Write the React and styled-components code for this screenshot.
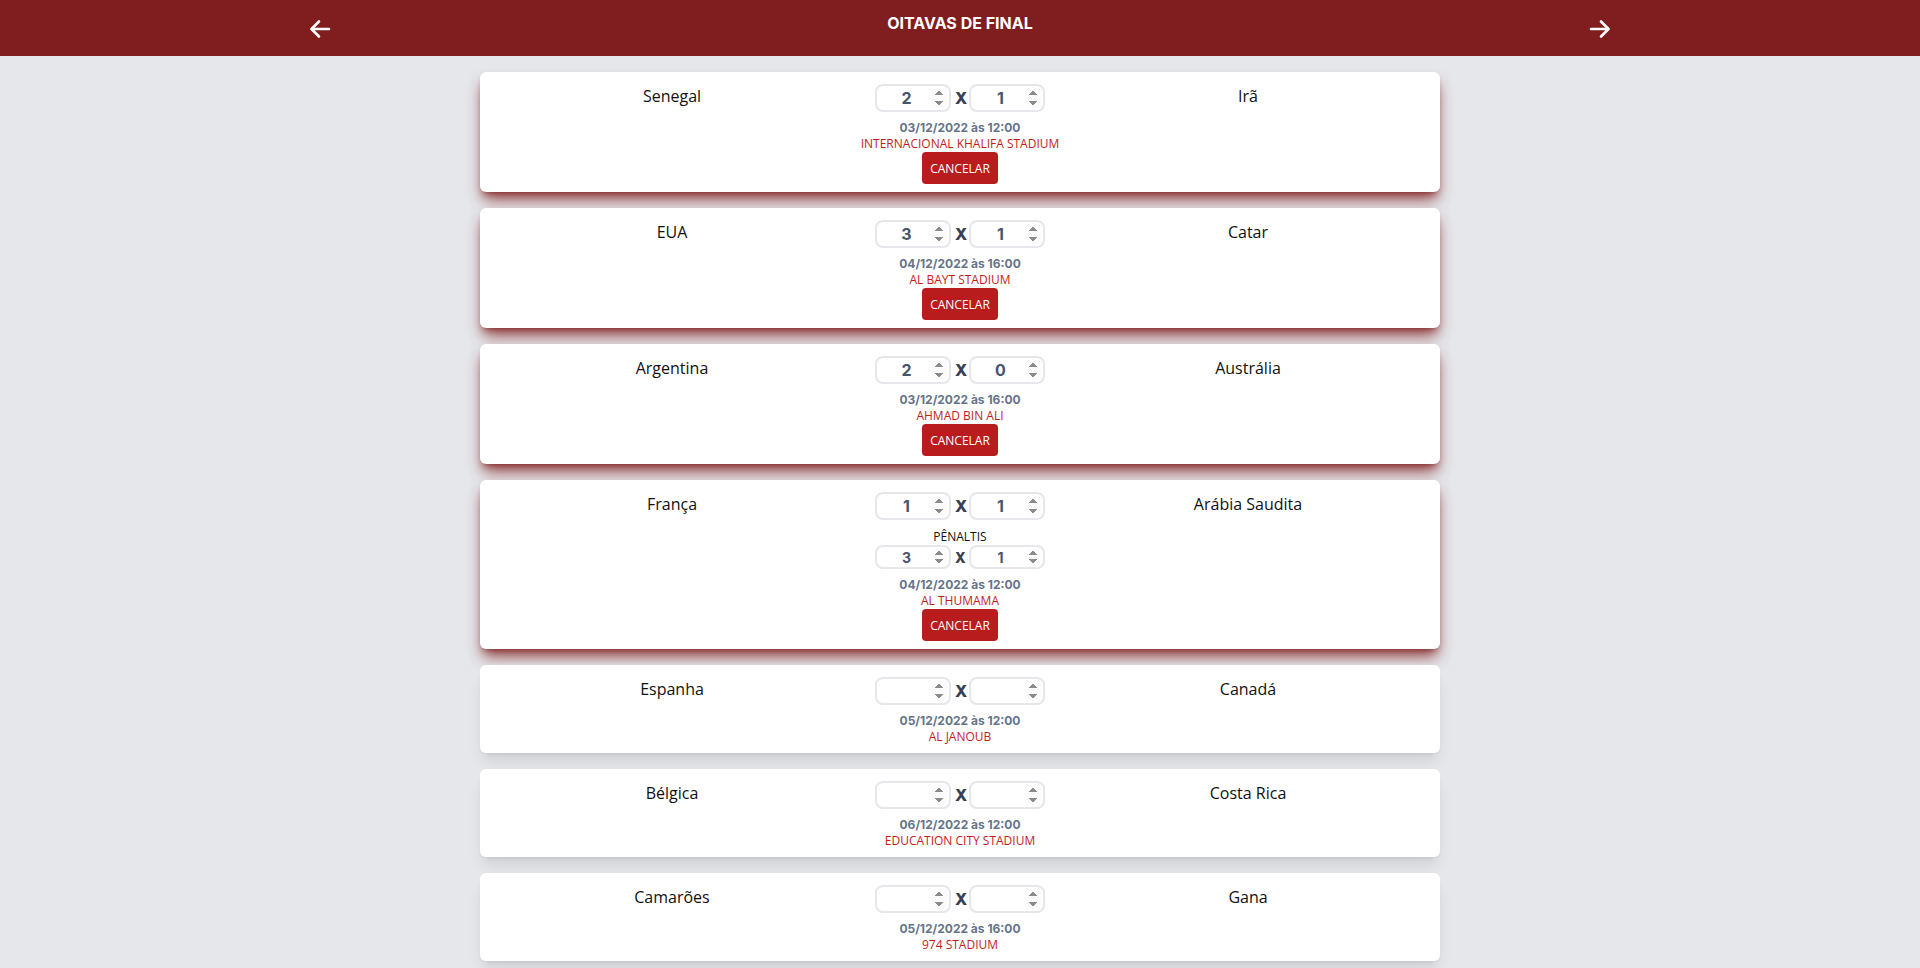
import React from 'react';
import styled, { createGlobalStyle } from 'styled-components';

const GlobalStyle = createGlobalStyle`
	body {
		margin: 0;
		background-color: #e5e7eb;
		font-family: 'Open Sans', 'Noto Sans', sans-serif;
	}
`;

const Header = styled.header`
	height: 56px;
	background-color: #801d1e;
	display: grid;
	grid-template-columns: repeat(3, 1fr);
	align-items: center;
	justify-items: center;
`;

const Title = styled.h1`
	align-self: start;
	margin: 0;
	padding-top: 11px;
	font-family: 'Inter', sans-serif;
	font-size: 16px;
	line-height: 24px;
	font-weight: 700;
	color: #ffffff;
`;

const ArrowButton = styled.button`
	background: none;
	border: none;
	padding: 0;
	margin-top: 1px;
	cursor: pointer;
	display: flex;
	color: #ffffff;
`;

const List = styled.main`
	width: 960px;
	margin: 0 auto;
	padding: 16px 0;
	display: flex;
	flex-direction: column;
	gap: 16px;
`;

const Card = styled.div`
	background-color: #ffffff;
	border-radius: 6px;
	padding: 12px 48px 8px;
	display: grid;
	grid-template-columns: repeat(3, 1fr);
	box-shadow: ${props =>
		props.saved
			? '0 10px 15px -3px rgba(127, 29, 29, 0.85), 0 4px 6px -4px rgba(127, 29, 29, 0.85)'
			: '0 10px 15px -3px rgba(0, 0, 0, 0.1), 0 4px 6px -4px rgba(0, 0, 0, 0.1)'};
`;

const TeamName = styled.div`
	text-align: center;
	font-size: 16px;
	line-height: 24px;
	color: #111111;
`;

const Middle = styled.div`
	display: flex;
	flex-direction: column;
	align-items: center;
`;

const ScoreRow = styled.div`
	display: flex;
	align-items: center;
	gap: 4px;
`;

const ScoreInput = styled.input`
	box-sizing: border-box;
	width: 76px;
	height: ${props => (props.small ? '24px' : '28px')};
	border: 2px solid #e5e7eb;
	border-radius: 8px;
	padding: 0 2px 0 4px;
	text-align: center;
	font-family: 'Inter', sans-serif;
	font-weight: 700;
	font-size: ${props => (props.small ? '14px' : '16px')};
	color: #475569;
	background: #ffffff;
	outline: none;

	&::-webkit-inner-spin-button,
	&::-webkit-outer-spin-button {
		opacity: 1;
	}
`;

const Versus = styled.span`
	font-family: 'Inter', sans-serif;
	font-weight: 800;
	font-size: ${props => (props.small ? '14px' : '16px')};
	color: #374151;
	width: 10px;
	text-align: center;
`;

const PenaltyLabel = styled.div`
	margin-top: 9px;
	font-size: 12px;
	line-height: 16px;
	color: #111111;
`;

const MatchDate = styled.div`
	margin-top: 8px;
	font-family: 'Inter', sans-serif;
	font-weight: 700;
	font-size: 12px;
	line-height: 16px;
	color: #64748b;
`;

const Stadium = styled.div`
	font-size: 12px;
	line-height: 16px;
	color: #c21d1d;
`;

const CancelButton = styled.button`
	height: 32px;
	padding: 0 8px;
	border: none;
	border-radius: 4px;
	background-color: #b91c1c;
	color: #ffffff;
	font-family: 'Open Sans', sans-serif;
	font-size: 12px;
	cursor: pointer;
`;

const matches = [
	{ home: 'Senegal', away: 'Irã', homeGoals: 2, awayGoals: 1, date: '03/12/2022 às 12:00', stadium: 'INTERNACIONAL KHALIFA STADIUM', saved: true },
	{ home: 'EUA', away: 'Catar', homeGoals: 3, awayGoals: 1, date: '04/12/2022 às 16:00', stadium: 'AL BAYT STADIUM', saved: true },
	{ home: 'Argentina', away: 'Austrália', homeGoals: 2, awayGoals: 0, date: '03/12/2022 às 16:00', stadium: 'AHMAD BIN ALI', saved: true },
	{ home: 'França', away: 'Arábia Saudita', homeGoals: 1, awayGoals: 1, penalties: [3, 1], date: '04/12/2022 às 12:00', stadium: 'AL THUMAMA', saved: true },
	{ home: 'Espanha', away: 'Canadá', date: '05/12/2022 às 12:00', stadium: 'AL JANOUB' },
	{ home: 'Bélgica', away: 'Costa Rica', date: '06/12/2022 às 12:00', stadium: 'EDUCATION CITY STADIUM' },
	{ home: 'Camarões', away: 'Gana', date: '05/12/2022 às 16:00', stadium: '974 STADIUM' }
];

const Arrow = ({ left }) => (
	<svg width="22" height="20" viewBox="0 0 22 20" fill="none" stroke="currentColor" strokeWidth="2.6" strokeLinecap="round" strokeLinejoin="round">
		{left ? (
			<>
				<path d="M20 10H3" />
				<path d="M10 2.5L2.5 10L10 17.5" />
			</>
		) : (
			<>
				<path d="M2 10H19" />
				<path d="M12 2.5L19.5 10L12 17.5" />
			</>
		)}
	</svg>
);

const Score = ({ home, away, small }) => (
	<ScoreRow>
		<ScoreInput small={small} type="number" defaultValue={home} />
		<Versus small={small}>X</Versus>
		<ScoreInput small={small} type="number" defaultValue={away} />
	</ScoreRow>
);

export default function App() {
	return (
		<>
			<GlobalStyle />
			<Header>
				<ArrowButton aria-label="Anterior">
					<Arrow left />
				</ArrowButton>
				<Title>OITAVAS DE FINAL</Title>
				<ArrowButton aria-label="Próxima">
					<Arrow />
				</ArrowButton>
			</Header>
			<List>
				{matches.map(match => (
					<Card key={match.home} saved={match.saved}>
						<TeamName>{match.home}</TeamName>
						<Middle>
							<Score home={match.homeGoals} away={match.awayGoals} />
							{match.penalties && (
								<>
									<PenaltyLabel>PÊNALTIS</PenaltyLabel>
									<Score small home={match.penalties[0]} away={match.penalties[1]} />
								</>
							)}
							<MatchDate>{match.date}</MatchDate>
							<Stadium>{match.stadium}</Stadium>
							{match.saved && <CancelButton>CANCELAR</CancelButton>}
						</Middle>
						<TeamName>{match.away}</TeamName>
					</Card>
				))}
			</List>
		</>
	);
}
